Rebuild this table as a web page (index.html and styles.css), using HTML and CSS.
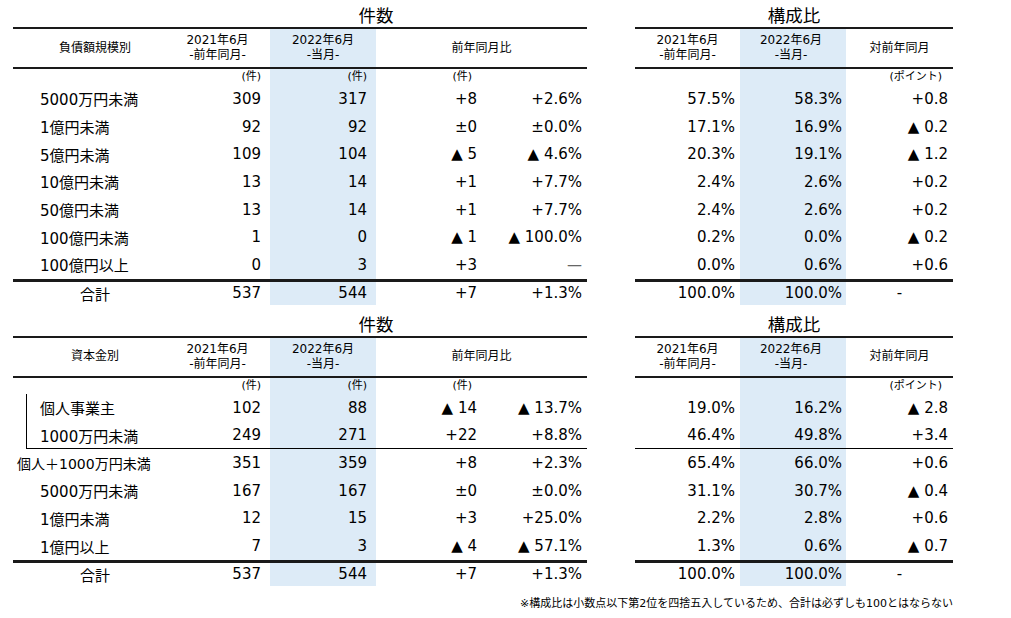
FILE: index.html
```html
<!DOCTYPE html>
<html lang="ja">
<head>
<meta charset="utf-8">
<title>件数・構成比</title>
<link rel="stylesheet" href="styles.css">
</head>
<body>
<div class="sec">
  <table class="tl">
    <colgroup><col class="c0"><col class="c1"><col class="c2"><col class="c3"><col class="c4"></colgroup>
    <tr class="title"><td></td><td colspan="4" class="ttl">件数</td></tr>
    <tr class="head"><td class="hl">負債額規模別</td><td>2021年6月<br>-前年同月-</td><td class="sh">2022年6月<br>-当月-</td><td colspan="2">前年同月比</td></tr>
    <tr class="unit"><td></td><td class="p9">(件)</td><td class="sh p9">(件)</td><td class="u3">(件)</td><td></td></tr>
    <tr class="row"><td class="lb">5000万円未満</td><td class="p9">309</td><td class="sh p9">317</td><td>+8</td><td>+2.6%</td></tr>
    <tr class="row"><td class="lb">1億円未満</td><td class="p9">92</td><td class="sh p9">92</td><td>±0</td><td>±0.0%</td></tr>
    <tr class="row"><td class="lb">5億円未満</td><td class="p9">109</td><td class="sh p9">104</td><td>▲ 5</td><td>▲ 4.6%</td></tr>
    <tr class="row"><td class="lb">10億円未満</td><td class="p9">13</td><td class="sh p9">14</td><td>+1</td><td>+7.7%</td></tr>
    <tr class="row"><td class="lb">50億円未満</td><td class="p9">13</td><td class="sh p9">14</td><td>+1</td><td>+7.7%</td></tr>
    <tr class="row"><td class="lb">100億円未満</td><td class="p9">1</td><td class="sh p9">0</td><td>▲ 1</td><td>▲ 100.0%</td></tr>
    <tr class="row"><td class="lb">100億円以上</td><td class="p9">0</td><td class="sh p9">3</td><td>+3</td><td class="dash">—</td></tr>
    <tr class="total"><td class="tlb">合計</td><td class="p9">537</td><td class="sh p9">544</td><td>+7</td><td>+1.3%</td></tr>
  </table>
  <table class="tr">
    <colgroup><col class="r1"><col class="r2"><col class="r3"></colgroup>
    <tr class="title"><td colspan="3" class="ttl">構成比</td></tr>
    <tr class="head"><td>2021年6月<br>-前年同月-</td><td class="sh">2022年6月<br>-当月-</td><td>対前年同月</td></tr>
    <tr class="unit"><td></td><td class="sh"></td><td class="pt">(ポイント)</td></tr>
    <tr class="row"><td>57.5%</td><td class="sh">58.3%</td><td>+0.8</td></tr>
    <tr class="row"><td>17.1%</td><td class="sh">16.9%</td><td>▲ 0.2</td></tr>
    <tr class="row"><td>20.3%</td><td class="sh">19.1%</td><td>▲ 1.2</td></tr>
    <tr class="row"><td>2.4%</td><td class="sh">2.6%</td><td>+0.2</td></tr>
    <tr class="row"><td>2.4%</td><td class="sh">2.6%</td><td>+0.2</td></tr>
    <tr class="row"><td>0.2%</td><td class="sh">0.0%</td><td>▲ 0.2</td></tr>
    <tr class="row"><td>0.0%</td><td class="sh">0.6%</td><td>+0.6</td></tr>
    <tr class="total"><td>100.0%</td><td class="sh">100.0%</td><td class="ctr">-</td></tr>
  </table>
</div>

<div class="sec">
  <table class="tl">
    <colgroup><col class="c0"><col class="c1"><col class="c2"><col class="c3"><col class="c4"></colgroup>
    <tr class="title t2"><td></td><td colspan="4" class="ttl">件数</td></tr>
    <tr class="head"><td class="hl">資本金別</td><td>2021年6月<br>-前年同月-</td><td class="sh">2022年6月<br>-当月-</td><td colspan="2">前年同月比</td></tr>
    <tr class="unit"><td></td><td class="p9">(件)</td><td class="sh p9">(件)</td><td class="u3">(件)</td><td></td></tr>
    <tr class="row"><td class="lb vb">個人事業主</td><td class="p9">102</td><td class="sh p9">88</td><td>▲ 14</td><td>▲ 13.7%</td></tr>
    <tr class="row ul"><td class="lb vbe">1000万円未満</td><td class="p9">249</td><td class="sh p9">271</td><td>+22</td><td>+8.8%</td></tr>
    <tr class="row"><td class="lb lw">個人＋1000万円未満</td><td class="p9">351</td><td class="sh p9">359</td><td>+8</td><td>+2.3%</td></tr>
    <tr class="row"><td class="lb">5000万円未満</td><td class="p9">167</td><td class="sh p9">167</td><td>±0</td><td>±0.0%</td></tr>
    <tr class="row"><td class="lb">1億円未満</td><td class="p9">12</td><td class="sh p9">15</td><td>+3</td><td>+25.0%</td></tr>
    <tr class="row"><td class="lb">1億円以上</td><td class="p9">7</td><td class="sh p9">3</td><td>▲ 4</td><td>▲ 57.1%</td></tr>
    <tr class="total"><td class="tlb">合計</td><td class="p9">537</td><td class="sh p9">544</td><td>+7</td><td>+1.3%</td></tr>
  </table>
  <table class="tr">
    <colgroup><col class="r1"><col class="r2"><col class="r3"></colgroup>
    <tr class="title t2"><td colspan="3" class="ttl">構成比</td></tr>
    <tr class="head"><td>2021年6月<br>-前年同月-</td><td class="sh">2022年6月<br>-当月-</td><td>対前年同月</td></tr>
    <tr class="unit"><td></td><td class="sh"></td><td class="pt">(ポイント)</td></tr>
    <tr class="row"><td>19.0%</td><td class="sh">16.2%</td><td>▲ 2.8</td></tr>
    <tr class="row ul"><td>46.4%</td><td class="sh">49.8%</td><td>+3.4</td></tr>
    <tr class="row"><td>65.4%</td><td class="sh">66.0%</td><td>+0.6</td></tr>
    <tr class="row"><td>31.1%</td><td class="sh">30.7%</td><td>▲ 0.4</td></tr>
    <tr class="row"><td>2.2%</td><td class="sh">2.8%</td><td>+0.6</td></tr>
    <tr class="row"><td>1.3%</td><td class="sh">0.6%</td><td>▲ 0.7</td></tr>
    <tr class="total"><td>100.0%</td><td class="sh">100.0%</td><td class="ctr">-</td></tr>
  </table>
</div>

<div class="note">※構成比は小数点以下第2位を四捨五入しているため、合計は必ずしも100とはならない</div>
</body>
</html>
```

FILE: styles.css
```css
* { box-sizing: border-box; }
body {
  margin: 0;
  padding: 0 0 0 13px;
  background: #fff;
  color: #000;
  font-family: "DejaVu Sans", "Noto Sans CJK JP", sans-serif;
}
.sec { display: flex; gap: 48px; align-items: flex-start; }
table { border-collapse: separate; border-spacing: 0; table-layout: fixed; }
td { padding: 0 5px 0 0; white-space: nowrap; }
.tl { width: 574px; }
.tr { width: 318px; }
.c0 { width: 152px; }
.c1 { width: 105px; }
.c2 { width: 106px; }
.c3 { width: 106px; }
.c4 { width: 105px; }
.r1 { width: 105px; }
.r2 { width: 106px; }
.r3 { width: 107px; }

.title td { height: 27px; }
.title.t2 td { height: 31px; }
.ttl {
  font-family: "Noto Sans CJK JP", sans-serif;
  font-size: 17.5px;
  line-height: 20px;
  text-align: center;
  vertical-align: bottom;
  padding: 0 0 2px 0;
}

.head td {
  height: 42px;
  border-top: 2px solid #1a1a1a;
  border-bottom: 2px solid #1a1a1a;
  font-size: 12px;
  line-height: 15px;
  text-align: center;
  vertical-align: middle;
  padding: 0;
}
.head td.hl { padding-left: 12px; }

.unit td {
  height: 16px;
  font-size: 11px;
  line-height: 16px;
  text-align: right;
  vertical-align: middle;
}
.unit td.u3 { padding-right: 10px; }
.unit td.pt { padding-right: 11px; }

.row td {
  height: 27.7px;
  font-size: 15px;
  text-align: right;
  vertical-align: middle;
}
.total td {
  height: 26px;
  border-top: 3px solid #1a1a1a;
  font-size: 15px;
  text-align: right;
  vertical-align: middle;
}
td.p9 { padding-right: 9px; }
.tr td.sh { padding-right: 4px; }
td.lb { text-align: left; padding-left: 27px; }
.row td.lb.lw { padding-left: 4px; font-size: 14px; }
td.tlb { text-align: center; padding: 0 0 0 12px; }
td.ctr { text-align: center; padding: 0; }
td.dash { color: #666; }

.sh { background: #ddebf7; }
.title td.sh { background: none; }

.row.ul td { border-bottom: 1px solid #000; }
.row.ul td.vbe { border-bottom: none; }
td.vb {
  background: linear-gradient(#000, #000) 13px 0 / 1px 100% no-repeat;
}
td.vbe {
  background:
    linear-gradient(#000, #000) 13px 0 / 1px 100% no-repeat,
    linear-gradient(#000, #000) 13px 100% / calc(100% - 13px) 1px no-repeat;
}

.note {
  width: 940px;
  margin-top: 11px;
  text-align: right;
  font-size: 11px;
  line-height: 14px;
  font-family: "DejaVu Sans", "Noto Sans CJK JP", sans-serif;
}
```
